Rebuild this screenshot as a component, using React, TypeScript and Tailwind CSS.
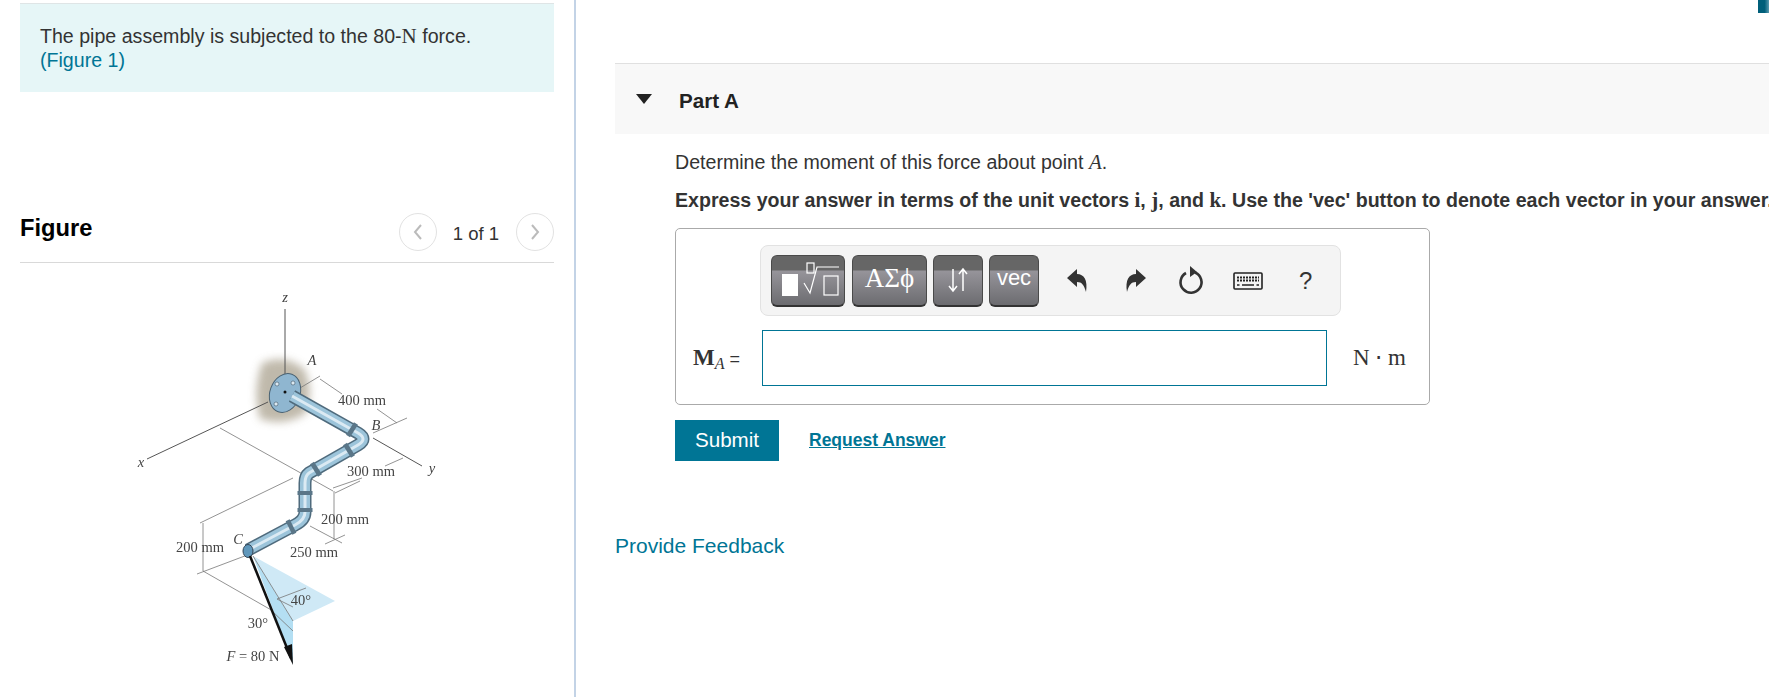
import { ReactNode } from 'react';

const serif = "font-['Liberation_Serif',serif]";

function ToolButton({ className, children }: { className: string; children: ReactNode }) {
    return (
        <div
            className={`h-[52px] flex items-center justify-center rounded-[6px] border border-[#4a4a4a] border-b-2 border-b-[#333] text-white bg-[linear-gradient(#666_0,#666_14px,#96949a_15px,#6c6c70_100%)] ${className}`}
        >
            {children}
        </div>
    );
}

const PIPE = 'M292 395L358 432Q368 438 358 444L309 472Q305 475 305 482V511Q305 519 295 524L248 549';

function PipeFigure() {
    const thin = { stroke: '#777', strokeWidth: 0.8, fill: 'none' };
    const label = `${serif} fill-[#444] text-[14.5px]`;
    return (
        <svg width="310" height="400" viewBox="130 290 310 400" className="block blur-[0.4px]">
            <defs>
                <filter id="smudge" x="-30%" y="-30%" width="160%" height="160%">
                    <feGaussianBlur stdDeviation="4" />
                </filter>
            </defs>
            <path d="M262 362 Q285 352 304 368 Q314 388 306 412 Q285 426 260 418 Q252 390 262 362Z" fill="#b0a896" opacity="0.8" filter="url(#smudge)" />
            <path d="M285 308V375M147 458L268 401M373 437L422 465" stroke="#555" strokeWidth="1" fill="none" />
            <path d="M220 427L333 490M293 477L200 522M203 522V570M197 573L250 553M203 570L273 610" {...thin} />
            <path d="M310 525L342 542M360 480L335 492M334 490V538M325 543L345 534M300 387L320 375M320 378L342 393M377 408L397 422M373 432L407 417M333 487L362 477M385 465L403 457" {...thin} />
            <path d="M253 555L335 600L293 620Z" fill="#cfe9f6" />
            <path d="M253 555L293 620V663Z" fill="#b4dff3" />
            <path d="M253 555L293 620M277 598L293 606M277 598L306 587M272 610L293 630" {...thin} />
            <ellipse cx="285" cy="392" rx="15" ry="20" transform="rotate(20 285 392)" fill="#8fb6d0" stroke="#4a6272" strokeWidth="1" />
            <circle cx="285" cy="391" r="1.5" fill="#111" />
            <circle cx="277" cy="383" r="2" fill="#dce9f1" stroke="#345" strokeWidth="0.5" />
            <circle cx="276" cy="403" r="2" fill="#dce9f1" stroke="#345" strokeWidth="0.5" />
            <circle cx="293" cy="382" r="2" fill="#dce9f1" stroke="#345" strokeWidth="0.5" />
            <path d={PIPE} stroke="#4f6b7d" strokeWidth="13" fill="none" />
            <path d={PIPE} stroke="#9cc4da" strokeWidth="10" fill="none" />
            <path d={PIPE} stroke="#dbeaf3" strokeWidth="3" fill="none" />
            <path d="M350 427.5L354 430M351 448L347 450.5M318 467L314 469.5M305 490V494M305 507V511M293 525L289 527" stroke="#5a7688" strokeWidth="15" fill="none" />
            <ellipse cx="248" cy="550" rx="5" ry="6.5" fill="#5f97bb" stroke="#345" strokeWidth="1" />
            <path d="M250 555L291 657" stroke="#111" strokeWidth="2.5" fill="none" />
            <path d="M293 664L284 646L292 643Z" fill="#111" />
            <text x="285" y="301" textAnchor="middle" className={`${label} italic`}>z</text>
            <text x="141" y="466" textAnchor="middle" className={`${label} italic`}>x</text>
            <text x="432" y="472" textAnchor="middle" className={`${label} italic`}>y</text>
            <text x="312" y="364" textAnchor="middle" className={`${label} italic`}>A</text>
            <text x="376" y="429" textAnchor="middle" className={`${label} italic`}>B</text>
            <text x="238" y="543" textAnchor="middle" className={`${label} italic`}>C</text>
            <text x="362" y="404" textAnchor="middle" className={label}>400 mm</text>
            <text x="371" y="475" textAnchor="middle" className={label}>300 mm</text>
            <text x="345" y="523" textAnchor="middle" className={label}>200 mm</text>
            <text x="200" y="551" textAnchor="middle" className={label}>200 mm</text>
            <text x="314" y="556" textAnchor="middle" className={label}>250 mm</text>
            <text x="301" y="604" textAnchor="middle" className={label}>40°</text>
            <text x="258" y="627" textAnchor="middle" className={label}>30°</text>
            <text x="253" y="660" textAnchor="middle" className={label}><tspan className="italic">F</tspan> = 80 N</text>
        </svg>
    );
}

export default function App() {
    return (
        <div className="relative flex h-[697px] w-[1769px] overflow-hidden bg-white font-['Liberation_Sans',sans-serif] text-[19.6px] text-[#333]">
            <div className="absolute right-0 top-0 h-[13px] w-[11px] bg-[linear-gradient(90deg,#005f7a_60%,#5a9bb0)]" />

            {/* left column */}
            <div className="w-[576px] shrink-0 border-r-2 border-[#c3d3e6] pl-[20px] pr-[20px] pt-[3px]">
                <div className="h-[89px] border-t border-[#dfe5e6] bg-[#e6f6f7] px-[20px] pt-[20px] leading-[24px]">
                    The pipe assembly is subjected to the 80-<span className={`${serif} text-[21px]`}>N</span> force.
                    <br />
                    <a className="text-[#007595]">(<span>Figure 1</span>)</a>
                </div>
                <div className="mt-[116px] flex h-[55px] items-start justify-between border-b border-[#d9d9d9]">
                    <div className="text-[23.7px] font-bold leading-[40px] text-black">Figure</div>
                    <div className="mt-[5px] flex items-center">
                        <div className="flex h-[38px] w-[38px] items-center justify-center rounded-full border border-[#e2e2e2]">
                            <svg width="12" height="18" viewBox="0 0 12 18"><path d="M9 2L3 9L9 16" stroke="#bbb" strokeWidth="2" fill="none" /></svg>
                        </div>
                        <span className="ml-[16px] mr-[17px] pt-[4px] text-[18.5px] text-[#333]">1 of 1</span>
                        <div className="flex h-[38px] w-[38px] items-center justify-center rounded-full border border-[#e2e2e2]">
                            <svg width="12" height="18" viewBox="0 0 12 18"><path d="M3 2L9 9L3 16" stroke="#bbb" strokeWidth="2" fill="none" /></svg>
                        </div>
                    </div>
                </div>
                <div className="ml-[110px] mt-[28px]">
                    <PipeFigure />
                </div>
            </div>

            {/* right column */}
            <div className="min-w-0 flex-1 pl-[39px] pt-[63px]">
                <div className="flex h-[71px] items-center border-t border-[#e0e0e0] bg-[#f8f8f8]">
                    <svg width="16" height="10" viewBox="0 0 16 10" className="ml-[21px]"><path d="M0 0H16L8 10Z" fill="#222" /></svg>
                    <span className="ml-[27px] pt-[4px] text-[20.6px] font-bold text-[#222]">Part A</span>
                </div>

                <div className="pl-[60px]">
                    <p className="mt-[16px] leading-[24px]">
                        Determine the moment of this force about point <span className={`${serif} italic text-[21px]`}>A</span>.
                    </p>
                    <p className="mt-[14px] whitespace-nowrap font-bold leading-[24px]">
                        Express your answer in terms of the unit vectors <span className={`${serif} text-[21px]`}>i</span>, <span className={`${serif} text-[21px]`}>j</span>, and <span className={`${serif} text-[21px]`}>k</span>. Use the 'vec' button to denote each vector in your answer.
                    </p>

                    <div className="mt-[16px] h-[177px] w-[755px] rounded-[5px] border border-[#aaa] pl-[84px] pt-[16px]">
                        <div className="flex h-[71px] w-[581px] items-center rounded-[8px] border border-[#e2e2e2] bg-[#f4f4f4] pl-[10px]">
                            <ToolButton className="w-[74px]">
                                <svg width="72" height="50" viewBox="0 0 72 50" fill="none" stroke="white" strokeWidth="1.2">
                                    <rect x="10" y="19" width="16" height="22" fill="white" stroke="none" />
                                    <rect x="35" y="8" width="7" height="10" />
                                    <path d="M32 28L38 38L45 12H67" />
                                    <rect x="52" y="21" width="14" height="19" />
                                </svg>
                            </ToolButton>
                            <ToolButton className={`ml-[7px] w-[75px] pb-[3px] ${serif} text-[27px]`}>ΑΣϕ</ToolButton>
                            <ToolButton className="ml-[6px] w-[50px]">
                                <svg width="24" height="26" viewBox="0 0 24 26" fill="none" stroke="white" strokeWidth="1.5">
                                    <path d="M7 2V24M3 19L7 24L11 19M17 24V2M13 7L17 2L21 7" />
                                </svg>
                            </ToolButton>
                            <ToolButton className="ml-[6px] w-[50px] pb-[5px] text-[22px]">vec</ToolButton>

                            <svg width="22" height="26" viewBox="0 0 22 26" className="ml-[27px]"><path d="M1 10L11 1V6C18 6 22 12 20 24C18 17 16 14 11 14V19Z" fill="#333" /></svg>
                            <svg width="22" height="26" viewBox="0 0 22 26" className="ml-[37px]"><path d="M21 10L11 1V6C4 6 0 12 2 24C4 17 6 14 11 14V19Z" fill="#333" /></svg>
                            <svg width="26" height="30" viewBox="0 0 26 30" fill="none" className="ml-[31px]">
                                <path d="M8 7A10.5 10.5 0 1 0 17 6.5" stroke="#333" strokeWidth="2.6" />
                                <path d="M12 0L19 6L12 11Z" fill="#333" />
                            </svg>
                            <svg width="30" height="20" viewBox="0 0 30 20" fill="none" className="ml-[29px]">
                                <rect x="1" y="2" width="28" height="16" rx="1" stroke="#222" strokeWidth="1.6" />
                                <path d="M4 6.5H26M4 9.5H26" stroke="#222" strokeWidth="1.8" strokeDasharray="2 1" />
                                <path d="M9 14H21M4 14H6.5M23.5 14H26" stroke="#222" strokeWidth="1.6" />
                            </svg>
                            <span className="ml-[36px] text-[24px] leading-none">?</span>
                        </div>

                        <div className="-ml-[84px] mt-[14px] flex items-center">
                            <div className="w-[86px] pl-[17px] whitespace-nowrap text-[18px]">
                                <span className={`${serif} text-[23px] font-bold`}>M</span>
                                <sub className={`${serif} text-[16px] italic`}>A</sub>
                                <span> =</span>
                            </div>
                            <div className="h-[56px] w-[565px] border border-[#007595] bg-white" />
                            <span className={`${serif} ml-[26px] text-[23px]`}>N ⋅ m</span>
                        </div>
                    </div>

                    <div className="mt-[15px] flex items-center">
                        <button className="h-[41px] w-[104px] bg-[#007595] text-[20.6px] text-white">Submit</button>
                        <a className="ml-[30px] text-[17.5px] font-bold text-[#007595] underline">Request Answer</a>
                    </div>
                </div>

                <p className="mt-[73px] text-[21px] leading-[24px] text-[#007595]">Provide Feedback</p>
            </div>
        </div>
    );
}
